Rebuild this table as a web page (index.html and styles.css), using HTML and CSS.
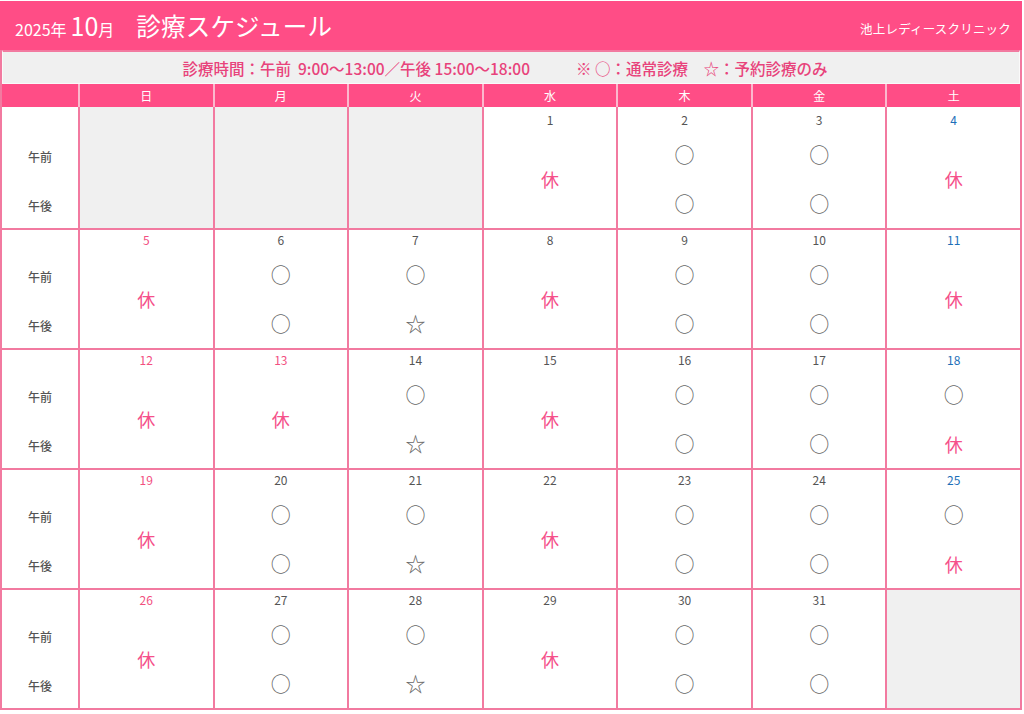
FILE: index.html
```html
<!DOCTYPE html>
<html lang="ja">
<head>
<meta charset="utf-8">
<title>診療スケジュール</title>
<link rel="stylesheet" href="styles.css">
</head>
<body>
<div class="sheet">
  <header class="top">
    <div class="title">
      <span class="year">2025年</span>
      <span class="month"><span class="mnum">10</span>月</span>
      <span class="heading">診療スケジュール</span>
    </div>
    <div class="clinic">池上レディースクリニック</div>
  </header>
  <div class="hours">
    <span>診療時間：午前&nbsp;&nbsp;9:00〜13:00／午後 15:00〜18:00</span>
    <span>※ ○：通常診療　☆：予約診療のみ</span>
  </div>
  <div class="days">
    <div class="dh"></div>
    <div class="dh">日</div>
    <div class="dh">月</div>
    <div class="dh">火</div>
    <div class="dh">水</div>
    <div class="dh">木</div>
    <div class="dh">金</div>
    <div class="dh">土</div>
  </div>
  <div class="grid">
    <!-- week 1 -->
    <div class="label w1"><span class="am">午前</span><span class="pm">午後</span></div>
    <div class="cell w1 empty"></div>
    <div class="cell w1 empty"></div>
    <div class="cell w1 empty"></div>
    <div class="cell w1"><span class="date">1</span><span class="off full">休</span></div>
    <div class="cell w1"><span class="date">2</span><span class="mk am">○</span><span class="mk pm">○</span></div>
    <div class="cell w1"><span class="date">3</span><span class="mk am">○</span><span class="mk pm">○</span></div>
    <div class="cell w1"><span class="date sat">4</span><span class="off full">休</span></div>
    <!-- week 2 -->
    <div class="label"><span class="am">午前</span><span class="pm">午後</span></div>
    <div class="cell"><span class="date sun">5</span><span class="off full">休</span></div>
    <div class="cell"><span class="date">6</span><span class="mk am">○</span><span class="mk pm">○</span></div>
    <div class="cell"><span class="date">7</span><span class="mk am">○</span><span class="mk pm">☆</span></div>
    <div class="cell"><span class="date">8</span><span class="off full">休</span></div>
    <div class="cell"><span class="date">9</span><span class="mk am">○</span><span class="mk pm">○</span></div>
    <div class="cell"><span class="date">10</span><span class="mk am">○</span><span class="mk pm">○</span></div>
    <div class="cell"><span class="date sat">11</span><span class="off full">休</span></div>
    <!-- week 3 -->
    <div class="label"><span class="am">午前</span><span class="pm">午後</span></div>
    <div class="cell"><span class="date sun">12</span><span class="off full">休</span></div>
    <div class="cell"><span class="date sun">13</span><span class="off full">休</span></div>
    <div class="cell"><span class="date">14</span><span class="mk am">○</span><span class="mk pm">☆</span></div>
    <div class="cell"><span class="date">15</span><span class="off full">休</span></div>
    <div class="cell"><span class="date">16</span><span class="mk am">○</span><span class="mk pm">○</span></div>
    <div class="cell"><span class="date">17</span><span class="mk am">○</span><span class="mk pm">○</span></div>
    <div class="cell"><span class="date sat">18</span><span class="mk am">○</span><span class="off pm">休</span></div>
    <!-- week 4 -->
    <div class="label"><span class="am">午前</span><span class="pm">午後</span></div>
    <div class="cell"><span class="date sun">19</span><span class="off full">休</span></div>
    <div class="cell"><span class="date">20</span><span class="mk am">○</span><span class="mk pm">○</span></div>
    <div class="cell"><span class="date">21</span><span class="mk am">○</span><span class="mk pm">☆</span></div>
    <div class="cell"><span class="date">22</span><span class="off full">休</span></div>
    <div class="cell"><span class="date">23</span><span class="mk am">○</span><span class="mk pm">○</span></div>
    <div class="cell"><span class="date">24</span><span class="mk am">○</span><span class="mk pm">○</span></div>
    <div class="cell"><span class="date sat">25</span><span class="mk am">○</span><span class="off pm">休</span></div>
    <!-- week 5 -->
    <div class="label"><span class="am">午前</span><span class="pm">午後</span></div>
    <div class="cell"><span class="date sun">26</span><span class="off full">休</span></div>
    <div class="cell"><span class="date">27</span><span class="mk am">○</span><span class="mk pm">○</span></div>
    <div class="cell"><span class="date">28</span><span class="mk am">○</span><span class="mk pm">☆</span></div>
    <div class="cell"><span class="date">29</span><span class="off full">休</span></div>
    <div class="cell"><span class="date">30</span><span class="mk am">○</span><span class="mk pm">○</span></div>
    <div class="cell"><span class="date">31</span><span class="mk am">○</span><span class="mk pm">○</span></div>
    <div class="cell empty"></div>
  </div>
</div>
</body>
</html>
```

FILE: styles.css
```css
* { box-sizing: border-box; }
html, body { margin: 0; padding: 0; background: #ffffff; }
body {
  font-family: "Noto Sans CJK JP", "Noto Sans", sans-serif;
  padding-top: 1px;
}
.sheet {
  width: 1022px;
  height: 709px;
  border: 2px solid #f27aa0;
  display: flex;
  flex-direction: column;
}
.top {
  height: 49px;
  flex: none;
  background: #ff4d86;
  color: #ffffff;
  display: flex;
  align-items: center;
  justify-content: space-between;
  padding: 0 11px 0 15px;
  margin: -2px -2px 0 -2px;
}
.title {
  display: flex;
  align-items: baseline;
  padding-bottom: 2px;
}
.year { font-size: 16px; }
.month { font-size: 16px; margin-left: 4px; }
.mnum { font-size: 25px; }
.heading { font-size: 24.5px; margin-left: 22px; letter-spacing: 0.2px; }
.clinic { font-size: 12.5px; padding-top: 6px; letter-spacing: 0.2px; }
.hours {
  height: 34px;
  flex: none;
  background: #f0f0f0;
  border: 1px solid #fafafa;
  border-top: 2px solid #f27aa0;
  display: flex;
  align-items: center;
  justify-content: center;
  gap: 46px;
  color: #e8437b;
  font-size: 15.5px;
  font-weight: 500;
  padding-right: 12px;
}
.days {
  height: 23px;
  flex: none;
  display: grid;
  grid-template-columns: 76px repeat(7, 1fr);
  gap: 2px;
  background: #fbb8cd;
}
.dh {
  background: #ff4d86;
  color: #ffffff;
  font-size: 12px;
  display: flex;
  align-items: center;
  justify-content: center;
}
.grid {
  flex: 1;
  display: grid;
  grid-template-columns: 76px repeat(7, 1fr);
  grid-template-rows: 121px repeat(4, 1fr);
  gap: 2px;
  background: #f27aa0;
}
.label, .cell {
  background: #ffffff;
  display: grid;
  grid-template-rows: 20px 50px 48px;
  justify-items: center;
  align-items: center;
}
.w1 { padding-top: 3px; }
.label {
  color: #555555;
  font-size: 12px;
  font-weight: 500;
}
.label .am { grid-row: 2; padding-top: 2px; }
.label .pm { grid-row: 3; padding-top: 2px; }
.cell.empty { background: #f0f0f0; }
.date {
  grid-row: 1;
  font-size: 12px;
  line-height: 16px;
  color: #555555;
}
.date.sun { color: #f2507f; }
.date.sat { color: #1d6fb8; }
.mk {
  font-size: 20px;
  line-height: 1;
  color: #666666;
}
.mk.am, .off.am { grid-row: 2; }
.mk.pm, .off.pm { grid-row: 3; }
.off {
  color: #f5508a;
  font-size: 18px;
  line-height: 1;
}
.off.full { grid-row: 2 / 4; }
```
